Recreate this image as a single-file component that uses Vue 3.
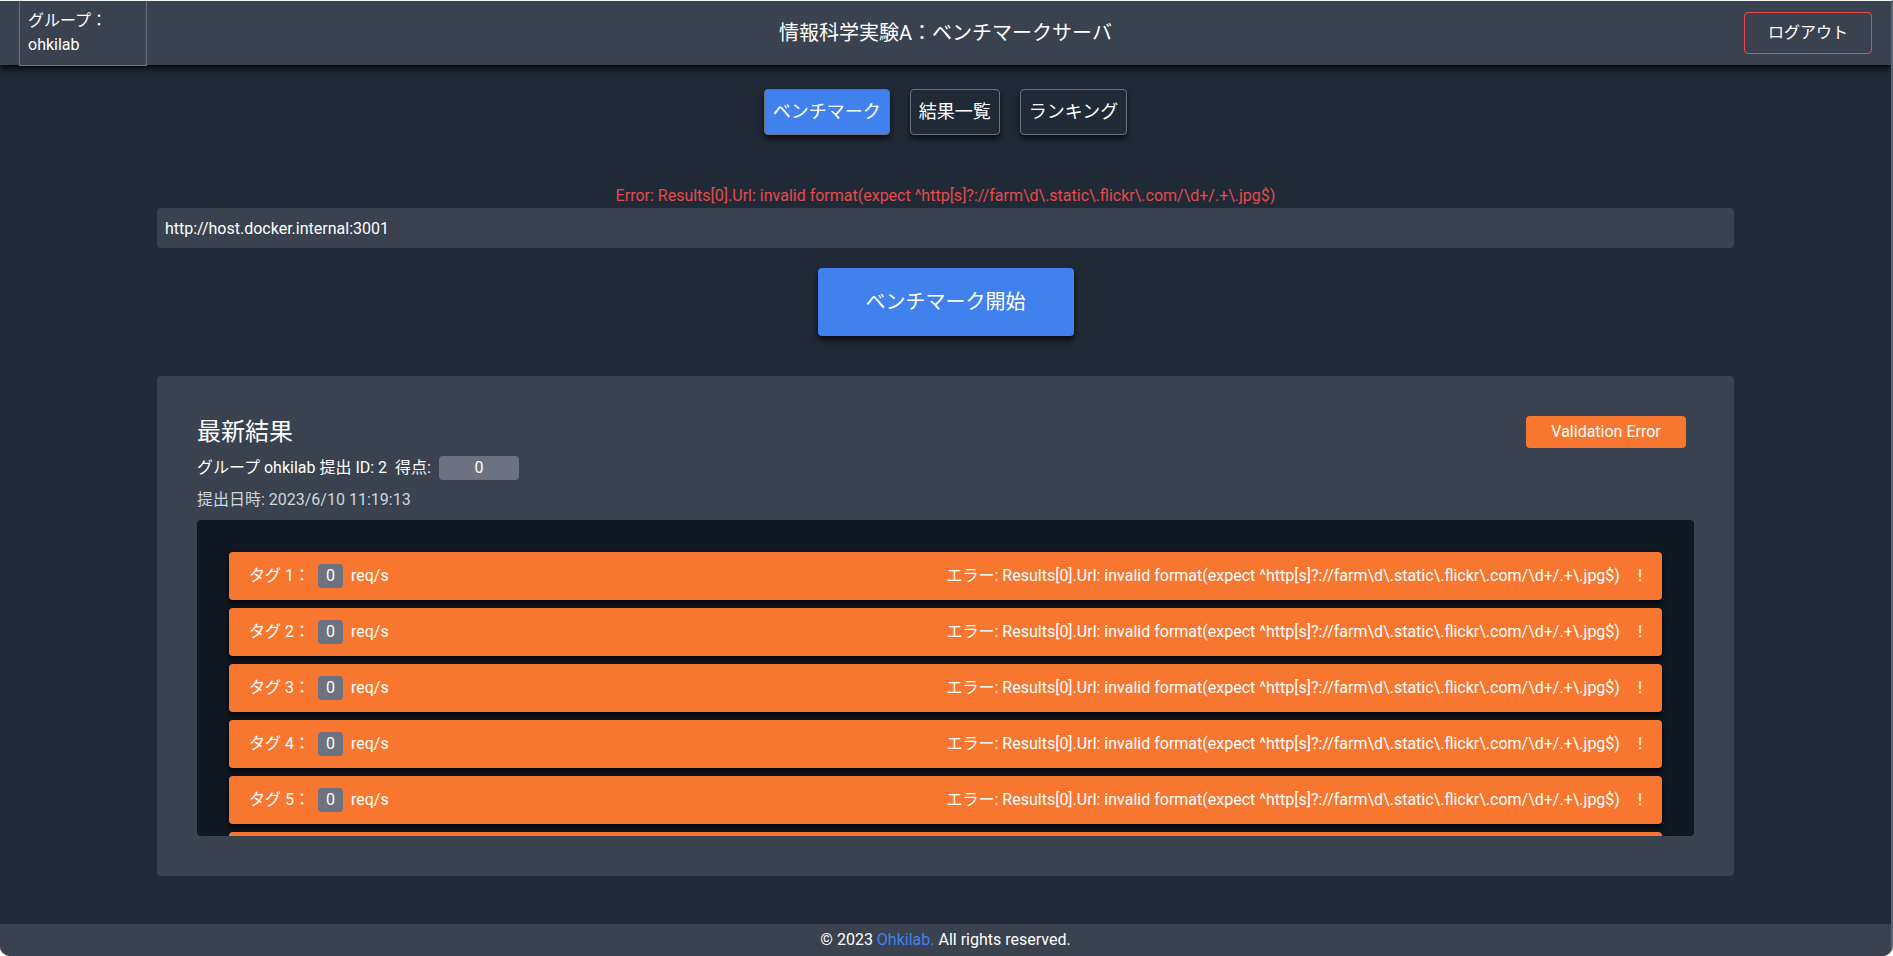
<script setup>
import { ref } from 'vue'

const group = 'ohkilab'
const target = ref('http://host.docker.internal:3001')
const message = 'Results[0].Url: invalid format(expect ^http[s]?://farm\\d\\.static\\.flickr\\.com/\\d+/.+\\.jpg$)'
const tabs = ['ベンチマーク', '結果一覧', 'ランキング']
const current = ref(0)
const results = Array.from({ length: 6 }, (_, i) => ({ id: i + 1, rps: 0 }))
</script>

<template>
  <div class="page">
    <header class="header">
      <div class="header-side">
        <div class="group">グループ：<br />{{ group }}</div>
      </div>
      <h1 class="title">情報科学実験A：ベンチマークサーバ</h1>
      <div class="header-side end">
        <button class="logout" type="button">ログアウト</button>
      </div>
    </header>

    <main class="main">
      <nav class="tabs">
        <button
          v-for="(tab, i) in tabs"
          :key="tab"
          type="button"
          class="tab"
          :class="{ active: i === current }"
          @click="current = i"
        >{{ tab }}</button>
      </nav>

      <form class="form" @submit.prevent>
        <p class="form-error">Error: {{ message }}</p>
        <input v-model="target" class="url" type="text" aria-label="URL" />
        <button class="start" type="submit">ベンチマーク開始</button>
      </form>

      <section class="card">
        <div class="card-head">
          <h2 class="card-title">最新結果</h2>
          <span class="status">Validation Error</span>
        </div>
        <div class="summary">
          <span>グループ {{ group }} 提出 ID: 2</span>
          <span>得点:</span>
          <span class="score">0</span>
        </div>
        <p class="date">提出日時: 2023/6/10 11:19:13</p>
        <ul class="list">
          <li v-for="r in results" :key="r.id" class="row">
            <span>タグ {{ r.id }}：</span>
            <span class="rps">{{ r.rps }}</span>
            <span>req/s</span>
            <span class="row-error">エラー: {{ message }}</span>
            <span class="mark">!</span>
          </li>
        </ul>
      </section>
    </main>

    <footer class="footer">© 2023 <a class="link" href="#">Ohkilab.</a> All rights reserved.</footer>
  </div>
</template>

<style>
body {
  background: #ffffff;
}
</style>

<style scoped>
* {
  box-sizing: border-box;
  margin: 0;
  padding: 0;
}

.page {
  display: flex;
  flex-direction: column;
  height: 100vh;
  overflow: hidden;
  border-top: 1px solid #f4f5f5;
  border-right: 2px solid #5b6470;
  border-radius: 0 0 10px 10px;
  background: #202a37;
  color: #ffffff;
  font: 16px/24px Roboto, "Noto Sans CJK JP", sans-serif;
}

button,
input {
  font: inherit;
  color: inherit;
}

button {
  cursor: pointer;
}

.header {
  display: flex;
  align-items: center;
  flex: none;
  height: 64px;
  padding: 0 19px;
  background: #3a4250;
  box-shadow: 0 4px 6px rgba(0, 0, 0, 0.8);
}

.header-side {
  display: flex;
  flex: 1;
}

.header-side.end {
  justify-content: flex-end;
}

.group {
  width: 128px;
  padding: 8px;
  border: 1px solid #6b7280;
}

.title {
  font-size: 20px;
  font-weight: 400;
  line-height: 28px;
}

.logout {
  width: 128px;
  padding: 8px;
  border: 1px solid #ef4444;
  border-radius: 4px;
  background: none;
}

.main {
  display: flex;
  flex: 1;
  flex-direction: column;
  align-items: center;
  min-height: 0;
  padding: 24px 0 48px;
}

.tabs {
  display: flex;
  gap: 20px;
}

.tab {
  padding: 8px;
  border: 1px solid #6b7280;
  border-radius: 4px;
  background: #202a37;
  box-shadow: 0 4px 6px rgba(0, 0, 0, 0.7);
  font-size: 18px;
  line-height: 28px;
}

.tab.active {
  background: #4081ee;
}

.form {
  display: flex;
  flex-direction: column;
  align-items: center;
  width: 83.4%;
  margin-top: 49px;
}

.form-error {
  color: #e34a4a;
}

.url {
  width: 100%;
  height: 40px;
  padding: 8px;
  border: 0;
  border-radius: 4px;
  background: #3a4250;
}

.start {
  width: 256px;
  margin-top: 20px;
  padding: 20px;
  border: 0;
  border-radius: 4px;
  background: #4081ee;
  box-shadow: 0 4px 6px rgba(0, 0, 0, 0.8);
  font-size: 20px;
  line-height: 28px;
}

.card {
  display: flex;
  flex: 1;
  flex-direction: column;
  width: 83.4%;
  min-height: 0;
  margin-top: 40px;
  padding: 40px;
  border-radius: 4px;
  background: #3a4250;
}

.card-head {
  display: flex;
  align-items: center;
  justify-content: space-between;
  padding-right: 8px;
}

.card-title {
  font-size: 24px;
  font-weight: 400;
  line-height: 32px;
}

.status {
  width: 160px;
  padding: 4px;
  border-radius: 4px;
  background: #f87730;
  text-align: center;
}

.summary {
  display: flex;
  gap: 8px;
  margin-top: 8px;
}

.score {
  width: 80px;
  border-radius: 4px;
  background: #6c727f;
  text-align: center;
}

.date {
  margin: 8px 0;
  color: #d1d5db;
}

.list {
  display: flex;
  flex: 1;
  flex-direction: column;
  gap: 8px;
  min-height: 0;
  padding: 32px;
  overflow-y: auto;
  border-radius: 4px;
  background: #101824;
  list-style: none;
  scrollbar-width: none;
}

.row {
  display: flex;
  flex: none;
  gap: 8px;
  padding: 12px 20px;
  border-radius: 4px;
  background: #f87730;
  box-shadow: 0 4px 6px rgba(0, 0, 0, 0.8);
}

.rps {
  padding: 0 8px;
  border-radius: 4px;
  background: #6c727f;
}

.row-error {
  margin-left: auto;
}

.mark {
  margin-left: 10px;
}

.footer {
  flex: none;
  padding: 4px;
  background: #3a4250;
  text-align: center;
}

.link {
  color: #4081ee;
  text-decoration: none;
}
</style>
